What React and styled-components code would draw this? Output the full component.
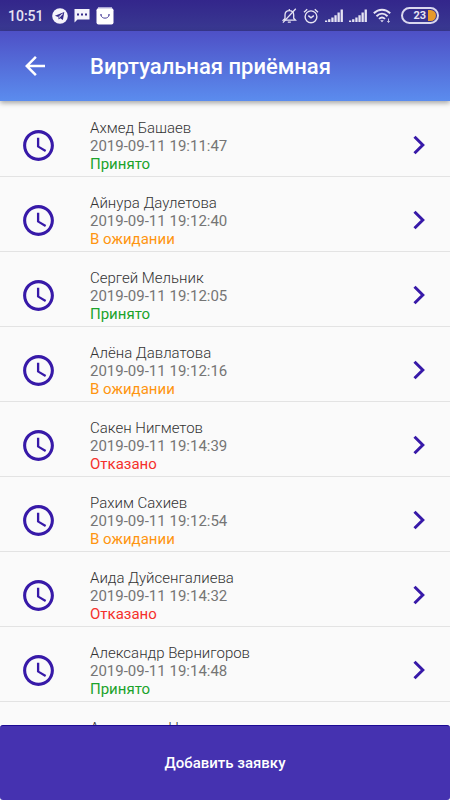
import styled, { createGlobalStyle } from 'styled-components'
import { MdArrowBack, MdAccessTime } from 'react-icons/md'

const GlobalStyle = createGlobalStyle`
  * {
    box-sizing: border-box;
  }
  body {
    margin: 0;
    font-family: Roboto, "Noto Sans", sans-serif;
    background: #fafafa;
  }
`
const Page = styled.div`
  display: flex;
  flex-direction: column;
  height: 100vh;
`
const StatusBar = styled.div`
  display: flex;
  align-items: center;
  justify-content: space-between;
  height: 31px;
  padding: 0 11px 0 8px;
  color: #e6e4f3;
  background: linear-gradient(#33268b, #393991);
`
const StatusGroup = styled.div`
  display: flex;
  align-items: center;
  gap: 6px;
`
const Time = styled.span`
  margin-right: 2px;
  font-size: 14px;
  font-weight: 500;
`
const Battery = styled.div`
  display: flex;
  align-items: center;
  justify-content: flex-end;
  gap: 2px;
  width: 38px;
  height: 17px;
  margin-left: 4px;
  padding: 1px;
  border: 2px solid #d9d7ee;
  border-radius: 9px;
  font-size: 11px;
  font-weight: 700;
`
const Charge = styled.span`
  width: 8px;
  height: 11px;
  border-radius: 0 6px 6px 0;
  background: #e79a2b;
`
const Header = styled.header`
  position: relative;
  z-index: 1;
  display: flex;
  align-items: center;
  flex-shrink: 0;
  height: 70px;
  padding: 0 20px;
  color: #fff;
  background: linear-gradient(#4e50c6, #5b8cee);
  box-shadow: 0 2px 5px rgba(0, 0, 0, 0.35);
`
const BackButton = styled.button`
  display: flex;
  width: 70px;
  padding: 0;
  border: 0;
  color: inherit;
  background: none;
`
const Title = styled.h1`
  margin: 0;
  font-size: 22px;
  font-weight: 500;
`
const List = styled.ul`
  flex: 1;
  min-height: 0;
  margin: 0;
  padding: 1px 0 0;
  overflow-y: auto;
  scrollbar-width: none;
  list-style: none;
`
const Item = styled.li`
  border-bottom: 1px solid #e3e3e3;
`
const Row = styled.a`
  display: flex;
  align-items: center;
  height: 74px;
  padding: 0 18px 0 20px;
  color: #3719a8;
  text-decoration: none;
`
const IconCell = styled.span`
  display: flex;
  width: 70px;
  padding-top: 13px;
`
const Info = styled.span`
  display: flex;
  flex: 1;
  flex-direction: column;
  padding-top: 14px;
  font-size: 15px;
  line-height: 18px;
`
const Name = styled.span`
  font-weight: 300;
  color: #333;
`
const Date = styled.span`
  color: #757575;
`
const Status = styled.span`
  color: ${({ $color }) => $color};
`
const ArrowCell = styled.span`
  display: flex;
  padding-top: 12px;
`
const AddButton = styled.button`
  flex-shrink: 0;
  height: 75px;
  border: 0;
  border-top: 1px solid #1c0a94;
  border-radius: 3px;
  color: #fff;
  background: #4532b0;
  font-family: inherit;
  font-size: 15px;
  font-weight: 500;
`

const statuses = {
  accepted: { label: 'Принято', color: '#1ba32b' },
  waiting: { label: 'В ожидании', color: '#ff9510' },
  rejected: { label: 'Отказано', color: '#f5302c' },
}

const requests = [
  { name: 'Ахмед Башаев', date: '2019-09-11 19:11:47', status: 'accepted' },
  { name: 'Айнура Даулетова', date: '2019-09-11 19:12:40', status: 'waiting' },
  { name: 'Сергей Мельник', date: '2019-09-11 19:12:05', status: 'accepted' },
  { name: 'Алёна Давлатова', date: '2019-09-11 19:12:16', status: 'waiting' },
  { name: 'Сакен Нигметов', date: '2019-09-11 19:14:39', status: 'rejected' },
  { name: 'Рахим Сахиев', date: '2019-09-11 19:12:54', status: 'waiting' },
  { name: 'Аида Дуйсенгалиева', date: '2019-09-11 19:14:32', status: 'rejected' },
  { name: 'Александр Вернигоров', date: '2019-09-11 19:14:48', status: 'accepted' },
  { name: 'Александр Н', date: '2019-09-11 19:15:02', status: 'waiting' },
]

const TelegramIcon = () => (
  <svg width="16" height="16" viewBox="0 0 16 16">
    <circle cx="8" cy="8" r="7.8" fill="#f4f3fb" />
    <path d="M2.9 7.8 12.3 4 10.9 12 8.2 10.2 6.7 11.6 6.2 9z" fill="#352a8a" />
    <path d="M6.4 9.1 10.6 5.8 7.3 9.7" stroke="#f4f3fb" strokeWidth=".8" fill="none" />
  </svg>
)

const MessageIcon = () => (
  <svg width="16" height="15" viewBox="0 0 16 15">
    <path d="M1 1h14.5v10.5H3.5L.5 14.5V1z" fill="#f4f3fb" />
    <path d="M3 5.5h2v2H3zM7 5.5h2v2H7zM11 5.5h2v2h-2z" fill="#352a8a" />
  </svg>
)

const BagIcon = () => (
  <svg width="18" height="18" viewBox="0 0 18 18">
    <path d="M2 .8h14" stroke="#c9c5e6" strokeWidth="1.2" />
    <rect x=".5" y="1.2" width="17" height="16.3" rx="2" fill="#fff" />
    <path d="M5 8c.3 4.2 7.7 4.2 8 0" stroke="#463c98" strokeWidth="1" fill="none" />
    <circle cx="5" cy="7.8" r=".8" fill="#463c98" />
    <circle cx="13" cy="7.8" r=".8" fill="#463c98" />
  </svg>
)

const MuteIcon = () => (
  <svg width="15" height="16" viewBox="0 0 15 16" fill="none" stroke="currentColor" strokeWidth="1.3">
    <path d="M3 11.8V7C3 4.2 4.6 2.6 7.2 2.6S11.7 4.2 11.7 7v3.2l1.8 2H1.3L3 10.5M7.3 2.6V1M5.8 14.2h3" />
    <path d="M13.8.8.9 14.6" />
  </svg>
)

const AlarmIcon = () => (
  <svg width="16" height="16" viewBox="0 0 16 16" fill="none" stroke="currentColor" strokeWidth="1.4">
    <circle cx="8" cy="8.8" r="5.9" />
    <path d="M1 4.2 4.2 1.2M15 4.2l-3.2-3M5.3 7.6 8 9.8l2.8-2.2" />
  </svg>
)

const SignalIcon = () => (
  <svg width="18" height="14" viewBox="0 0 18 14" fill="currentColor">
    <path d="M0 11.5h2.2V13H0zM3.1 10.3h2.3V13H3.1zM6.3 8.5h2.3V13H6.3zM9.4 6.2h2.3V13H9.4zM12.5 3.6h2.3V13h-2.3zM15.6.6h2.3V13h-2.3z" />
  </svg>
)

const WifiIcon = () => (
  <svg width="18" height="15" viewBox="0 0 18 15" fill="none" stroke="currentColor" strokeWidth="1.9">
    <path d="M.8 5.2c4.8-4.7 11.6-4.7 16.4 0M3.5 8.2c3.3-3.2 7.7-3.2 11 0M6 10.9c1.9-1.8 4.1-1.8 6 0" />
    <path d="M7.2 12.2h3.6L9 14.2z" fill="currentColor" stroke="none" />
    <path d="M15.5 10.5v4M14.2 13l1.3 1.4 1.3-1.4" strokeWidth=".8" />
  </svg>
)

const ArrowIcon = () => (
  <svg width="26" height="26" viewBox="0 0 26 26" fill="none" stroke="currentColor" strokeWidth="3">
    <path d="M8.5 4.7 16.8 13l-8.3 8.3" />
  </svg>
)

const RequestItem = ({ name, date, status }) => (
  <Item>
    <Row href="#">
      <IconCell>
        <MdAccessTime size={37} />
      </IconCell>
      <Info>
        <Name>{name}</Name>
        <Date>{date}</Date>
        <Status $color={statuses[status].color}>{statuses[status].label}</Status>
      </Info>
      <ArrowCell>
        <ArrowIcon />
      </ArrowCell>
    </Row>
  </Item>
)

const App = () => {
  return (
    <Page>
      <GlobalStyle />
      <StatusBar>
        <StatusGroup>
          <Time>10:51</Time>
          <TelegramIcon />
          <MessageIcon />
          <BagIcon />
        </StatusGroup>
        <StatusGroup>
          <MuteIcon />
          <AlarmIcon />
          <SignalIcon />
          <SignalIcon />
          <WifiIcon />
          <Battery>
            23
            <Charge />
          </Battery>
        </StatusGroup>
      </StatusBar>
      <Header>
        <BackButton aria-label="Назад">
          <MdArrowBack size={30} />
        </BackButton>
        <Title>Виртуальная приёмная</Title>
      </Header>
      <List>
        {requests.map((request) => (
          <RequestItem key={request.date} {...request} />
        ))}
      </List>
      <AddButton type="button">Добавить заявку</AddButton>
    </Page>
  )
}

export default App
